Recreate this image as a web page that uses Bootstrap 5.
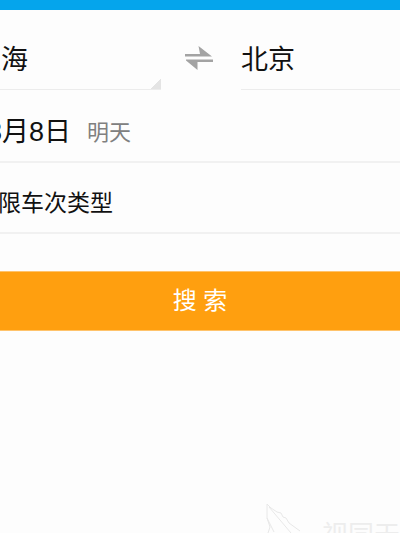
<!DOCTYPE html>
<html lang="zh-CN">
<head>
<meta charset="utf-8">
<meta name="viewport" content="width=device-width, initial-scale=1">
<title>火车票搜索</title>
<link href="https://cdn.jsdelivr.net/npm/bootstrap@5.3.0/dist/css/bootstrap.min.css" rel="stylesheet">
<style>
body{font-family:"Liberation Sans","Noto Sans CJK SC",sans-serif;background:#fdfdfd;color:#111}
.topbar{height:10px;background:#05a5ec}
.ticket-form{overflow:hidden}
.field{border:0;border-bottom:2px solid #f1f1f1;background:none;color:#111;text-align:left;padding:0;white-space:nowrap}
.shifted{margin-left:-26px}
.city{height:80px;font-size:27px;line-height:40px;padding-top:20px;border-bottom-width:1px;border-bottom-color:#ececec}
.city-from{width:187px;background:linear-gradient(135deg,transparent 50%,#e4e4e4 50%) right bottom/11px 11px no-repeat}
.swap{width:80px;height:80px;color:#a3a3a3;padding:16px 4px 0 0}
.date-row{height:73px;font-size:27px;padding-left:13px;padding-top:13px}
.type-row{height:71px;font-size:23px;padding-top:12px;padding-left:1px}
.hint{font-size:22px;color:#808080}
.search-btn{height:60px;margin-top:37px;background:#ff9f0f;color:#fff;font-size:24px;border:0;border-top:1px solid #ffc36b;border-bottom:1px solid #ffc36b}
.watermark{color:#ededed;font-size:26px;height:30px}
.watermark-bird{color:#e8e8e8}
.watermark-text{line-height:26px;padding-top:19px;margin-left:20px}
</style>
<script src="https://cdn.jsdelivr.net/npm/bootstrap@5.3.0/dist/js/bootstrap.bundle.min.js"></script>
</head>
<body class="min-vh-100 d-flex flex-column overflow-hidden">
<header class="topbar"></header>
<main class="ticket-form d-flex flex-column">
  <div class="d-flex">
    <button type="button" class="field city city-from shifted">上海</button>
    <button type="button" class="swap border-0 bg-transparent d-flex align-items-center justify-content-center" aria-label="交换城市">
      <svg width="28" height="26" viewBox="0 0 28 26" fill="currentColor" aria-hidden="true"><path d="M0 9H15L13.500 1L27 11.500H0ZM1 14.500H28V17H12.500V25L1 15.500Z"/></svg>
    </button>
    <button type="button" class="field city flex-grow-1">北京</button>
  </div>
  <button type="button" class="field date-row shifted d-flex align-items-center">8月8日<span class="hint ms-3">明天</span></button>
  <button type="button" class="field type-row shifted">不限车次类型</button>
  <button type="submit" class="search-btn w-100 p-0">搜 索</button>
</main>
<footer class="watermark mt-auto d-flex justify-content-end overflow-hidden">
  <svg class="watermark-bird" width="36" height="30" viewBox="0 0 36 30" fill="none" stroke="currentColor" aria-hidden="true"><path d="M2 30L4 24L1 15V1L5 5L11 9L15 10L17 14L20 15L23 20L34 28M3 4L25 30M1 15L8 29"/></svg>
  <span class="watermark-text">视同天</span>
</footer>
</body>
</html>
